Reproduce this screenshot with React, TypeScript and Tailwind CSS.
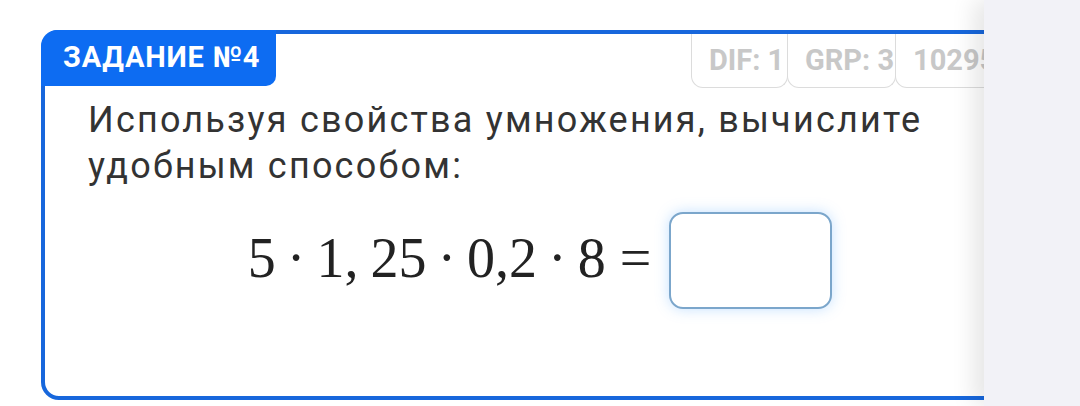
import React from "react";

const CHIPS = [
  { label: "DIF: 1", w: "w-[97px]" },
  { label: "GRP: 3", w: "w-[109px]" },
  { label: "10295", w: "w-[110px]" },
];

function Dot() {
  return <span className="mx-[11px]">·</span>;
}

export default function App() {
  return (
    <div
      className="relative w-[1080px] h-[406px] bg-white overflow-hidden"
      style={{ fontFamily: "Roboto, 'Noto Sans', sans-serif" }}
    >
      <div className="pt-[30px] pl-[41px]">
        {/* Task card */}
        <div className="w-[998px] h-[370px] border-4 border-[#1767dc] rounded-l-[18px] rounded-r-[18px] flex flex-col">
          {/* Header row */}
          <div className="flex items-start h-[52px] -mt-1 -ml-1">
            <div className="h-[56px] w-[235px] bg-[#0d6cf2] rounded-tl-[16px] rounded-br-[10px] flex items-center pl-[22px]">
              <span className="text-white font-bold text-[29px] tracking-[0.8px]">ЗАДАНИЕ №4</span>
            </div>
            <div className="flex ml-[415px] mt-1">
              {CHIPS.map(c => (
                <div
                  key={c.label}
                  className={`${c.w} h-[54px] border border-t-0 border-[#dcdcdc] rounded-b-[12px] flex items-center pl-[17px] overflow-hidden -mr-px`}
                >
                  <span className="text-[#c8c8c8] font-bold text-[29px] whitespace-nowrap">{c.label}</span>
                </div>
              ))}
            </div>
          </div>

          {/* Question */}
          <p className="pl-[43px] pt-[15px] text-[#333333] text-[36px] leading-[46px] tracking-[2.2px]">
            Используя свойства умножения, вычислите
            <br />
            удобным способом:
          </p>

          {/* Formula */}
          <div className="flex items-center justify-center mt-[23px]">
            <div
              className="text-[#222] text-[56px] leading-none flex items-center whitespace-nowrap -mt-[6px]"
              style={{ fontFamily: "'Liberation Serif', 'DejaVu Serif', serif" }}
            >
              <span>5</span>
              <Dot />
              <span>1,</span>
              <span className="ml-[12px]">25</span>
              <Dot />
              <span>0,2</span>
              <Dot />
              <span>8</span>
              <span className="ml-[14px]">=</span>
            </div>
            <div className="ml-[18px] w-[163px] h-[97px] border-2 border-[#7ba6cb] rounded-[14px] bg-white shadow-[0_0_14px_rgba(90,170,255,0.35)]" />
          </div>
        </div>
      </div>

      {/* Side panel overlay */}
      <div className="absolute top-0 right-0 w-[96px] h-full bg-[#f2f2f7] shadow-[-10px_0_22px_rgba(0,0,0,0.10)]" />
    </div>
  );
}
